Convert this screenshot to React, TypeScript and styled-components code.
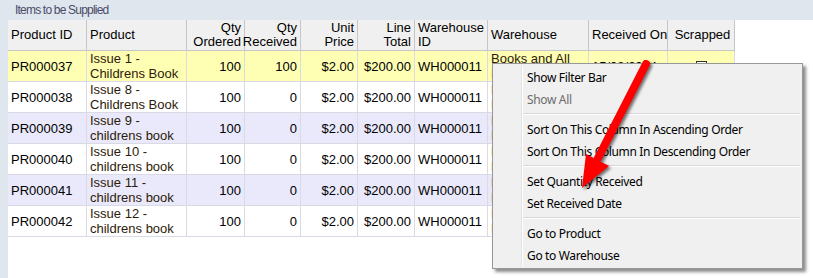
import React from 'react';
import styled, { createGlobalStyle } from 'styled-components';

const GlobalStyle = createGlobalStyle`
  html, body {
    margin: 0;
    padding: 0;
    background: #dfe6ee;
    overflow: hidden;
  }
`;

const COLS = '79px 100px 58px 56px 57px 57px 73px 101px 79px 67px';

const Page = styled.div`
  position: relative;
  width: 813px;
  height: 278px;
  font-family: 'Liberation Sans', Arial, sans-serif;
`;

const TitleBar = styled.div`
  height: 20px;
  padding-left: 15px;
  display: flex;
  align-items: center;
  font-size: 12px;
  letter-spacing: -0.8px;
  color: #4b4b68;
`;

const Panel = styled.div`
  margin-left: 8px;
  height: 258px;
  background: #ffffff;
`;

const Grid = styled.div`
  width: 727px;
`;

const HeaderRow = styled.div`
  display: grid;
  grid-template-columns: ${COLS};
  height: 31px;
  background: #f0f0f0;
  border-bottom: 1px solid #c6c6c6;
  box-sizing: border-box;
`;

const HeadCell = styled.div<{ $align?: string }>`
  display: flex;
  align-items: center;
  justify-content: ${(p) =>
    p.$align === 'right' ? 'flex-end' : p.$align === 'center' ? 'center' : 'flex-start'};
  text-align: ${(p) => p.$align || 'left'};
  padding: ${(p) => (p.$align === 'right' ? '0 3px 0 0' : '0 0 0 3px')};
  border-right: 1px solid #c6c6c6;
  font-size: 13px;
  line-height: 14px;
  color: #000;
  white-space: pre;
`;

const Row = styled.div<{ $bg: string }>`
  display: grid;
  grid-template-columns: ${COLS};
  height: 31px;
  background: ${(p) => p.$bg};
  border-bottom: 1px solid #dadae4;
  box-sizing: border-box;
`;

const Cell = styled.div<{ $align?: string; $tone?: string }>`
  display: flex;
  flex-direction: column;
  justify-content: center;
  align-items: ${(p) =>
    p.$align === 'right' ? 'flex-end' : p.$align === 'center' ? 'center' : 'flex-start'};
  padding: 0 3px;
  border-right: 1px solid #dadae4;
  font-size: 13px;
  line-height: 15px;
  color: ${(p) => p.$tone || '#000'};
  white-space: nowrap;
  overflow: hidden;
`;

const Check = styled.span`
  width: 9px;
  height: 9px;
  border: 1px solid #333;
  background: #fff;
`;

const Menu = styled.div`
  position: absolute;
  left: 492px;
  top: 63px;
  width: 311px;
  box-sizing: border-box;
  padding: 2px 2px 2px 0;
  background: #f0f0f0;
  border: 1px solid #979797;
  box-shadow: 3px 3px 3px rgba(0, 0, 0, 0.45);
  font-family: 'Noto Sans', 'Open Sans', sans-serif;
  font-size: 12px;
  letter-spacing: -0.35px;
  &::before {
    content: '';
    position: absolute;
    left: 28px;
    top: 2px;
    bottom: 2px;
    width: 1px;
    background: #e2e3e3;
    border-right: 1px solid #ffffff;
  }
`;

const MenuItem = styled.div<{ $disabled?: boolean }>`
  height: 22px;
  display: flex;
  align-items: center;
  padding-left: 34px;
  color: ${(p) => (p.$disabled ? '#6d6d6d' : '#000')};
`;

const Separator = styled.div`
  height: 1px;
  margin: 3px 0 3px 30px;
  background: #d7d7d7;
  border-bottom: 1px solid #ffffff;
`;

const Arrow = styled.svg`
  position: absolute;
  left: 0;
  top: 0;
  pointer-events: none;
  filter: drop-shadow(2px 2px 1.5px rgba(0, 0, 0, 0.55));
`;

type Item = {
  id: string;
  product: string[];
  received: string;
  bg: string;
};

const items: Item[] = [
  { id: 'PR000037', product: ['Issue 1 -', 'Childrens Book'], received: '100', bg: '#ffffb4' },
  { id: 'PR000038', product: ['Issue 8 -', 'Childrens Book'], received: '0', bg: '#ffffff' },
  { id: 'PR000039', product: ['Issue 9 -', 'childrens book'], received: '0', bg: '#e9e9fb' },
  { id: 'PR000040', product: ['Issue 10 -', 'childrens book'], received: '0', bg: '#ffffff' },
  { id: 'PR000041', product: ['Issue 11 -', 'childrens book'], received: '0', bg: '#e9e9fb' },
  { id: 'PR000042', product: ['Issue 12 -', 'childrens book'], received: '0', bg: '#ffffff' },
];

const headers: [string, string?][] = [
  ['Product ID'],
  ['Product'],
  ['Qty\nOrdered', 'right'],
  ['Qty\nReceived', 'right'],
  ['Unit\nPrice', 'right'],
  ['Line\nTotal', 'right'],
  ['Warehouse\nID'],
  ['Warehouse'],
  ['Received On'],
  ['Scrapped', 'center'],
];

const TEXT_TONE = '#2e1a08';

export default function App() {
  return (
    <Page>
      <GlobalStyle />
      <TitleBar>Items to be Supplied</TitleBar>
      <Panel>
        <Grid>
          <HeaderRow>
            {headers.map(([label, align]) => (
              <HeadCell key={label} $align={align}>
                {label}
              </HeadCell>
            ))}
          </HeaderRow>
          {items.map((it) => (
            <Row key={it.id} $bg={it.bg}>
              <Cell>{it.id}</Cell>
              <Cell $tone={TEXT_TONE}>
                <span>{it.product[0]}</span>
                <span>{it.product[1]}</span>
              </Cell>
              <Cell $align="right">100</Cell>
              <Cell $align="right">{it.received}</Cell>
              <Cell $align="right">$2.00</Cell>
              <Cell $align="right">$200.00</Cell>
              <Cell>WH000011</Cell>
              <Cell $tone={TEXT_TONE}>
                <span>Books and All</span>
                <span>Media</span>
              </Cell>
              <Cell>15/08/2014</Cell>
              <Cell $align="center">
                <Check />
              </Cell>
            </Row>
          ))}
        </Grid>
      </Panel>

      <Menu>
        <MenuItem>Show Filter Bar</MenuItem>
        <MenuItem $disabled>Show All</MenuItem>
        <Separator />
        <MenuItem>Sort On This Column In Ascending Order</MenuItem>
        <MenuItem>Sort On This Column In Descending Order</MenuItem>
        <Separator />
        <MenuItem>Set Quantity Received</MenuItem>
        <MenuItem>Set Received Date</MenuItem>
        <Separator />
        <MenuItem>Go to Product</MenuItem>
        <MenuItem>Go to Warehouse</MenuItem>
      </Menu>

      <Arrow width="813" height="278" viewBox="0 0 813 278">
        <line
          x1="646"
          y1="64"
          x2="598"
          y2="158"
          stroke="#ff0000"
          strokeWidth="8"
          strokeLinecap="round"
        />
        <polygon points="582,188 609,166 586,154" fill="#ff0000" />
      </Arrow>
    </Page>
  );
}
